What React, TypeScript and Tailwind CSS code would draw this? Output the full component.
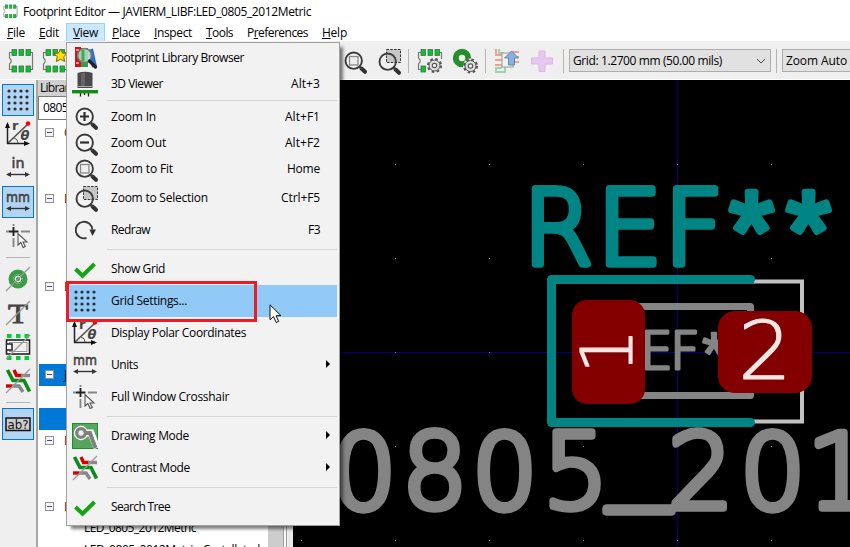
import { useLayoutEffect, useRef, useState } from "react";
import type { ReactNode } from "react";

/** Text whose letter spacing is computed so that it fills `w` pixels. */
function Fit({ w, children }: { w: number; children: ReactNode }) {
  const ref = useRef<HTMLSpanElement>(null);
  const [spacing, setSpacing] = useState(0);
  useLayoutEffect(() => {
    const el = ref.current;
    if (!el) return;
    const n = (el.textContent || "").length;
    setSpacing((w - el.getBoundingClientRect().width) / n);
  }, [w]);
  return (
    <span ref={ref} className="inline-block whitespace-pre" style={{ letterSpacing: spacing }}>
      {children}
    </span>
  );
}

const svgClass = "block h-[26px] w-[26px] shrink-0 overflow-visible";

function Magnifier({ kind }: { kind: "in" | "out" | "fit" | "sel" }) {
  const sel = kind === "sel";
  return (
    <svg viewBox="0 0 26 26" className={svgClass}>
      {sel && <rect x="11.500" y="1.500" width="14" height="13" fill="#c6c6c6" stroke="#333" strokeDasharray="2.500 1.300" />}
      <g transform={sel ? "translate(0 1)" : undefined}>
        <path d="M20.500 20.500l3.500 3.300" stroke="#303030" strokeWidth="4" strokeLinecap="round" />
        <path d="M18 18l3 3" stroke="#404040" strokeWidth="2" />
        <circle cx="12.700" cy="12.700" r="8.200" fill={sel ? "none" : "#f4f4f4"} stroke="#3a3a3a" strokeWidth="1.900" />
        {kind === "in" && <path d="M8 12.500h9M12.500 8v9" stroke="#303030" strokeWidth="2.200" />}
        {kind === "out" && <path d="M8 12.500h9" stroke="#303030" strokeWidth="2.200" />}
        {kind === "fit" && <rect x="8.500" y="8.500" width="8.500" height="8.500" fill="#eee" stroke="#888" strokeWidth="1.300" />}
      </g>
    </svg>
  );
}

function DotsIcon() {
  const p = [3, 9, 15, 21];
  return (
    <svg viewBox="0 0 26 26" className={svgClass}>
      {p.map((y) => p.map((x) => <circle key={`${x}-${y}`} cx={x + 1} cy={y + 1} r="1.600" fill="#2d3338" />))}
    </svg>
  );
}

function PolarIcon() {
  return (
    <svg viewBox="0 0 26 26" className={svgClass}>
      <path d="M2.500 22.500L23 3" stroke="#555" strokeWidth="1.700" />
      <path d="M2 22.500h21M2.500 23V3" stroke="#222" strokeWidth="1.500" fill="none" />
      <path d="M0 7L2.500 1L5 7zM19 20l6 2.500-6 2.500z" fill="#111" />
      <path d="M9 17q4 1 4 5" stroke="#555" fill="none" />
      <text x="7" y="9" fontSize="13" fontWeight="700" fill="#444" className="font-['DejaVu_Sans']">r</text>
      <text x="15.500" y="18.500" fontSize="13" fontWeight="700" fontStyle="italic" fill="#444" className="font-['DejaVu_Sans']">θ</text>
      <circle cx="23" cy="2.500" r="2.300" fill="#f00" />
    </svg>
  );
}

function UnitIcon({ unit }: { unit: string }) {
  return (
    <svg viewBox="0 0 26 26" className={svgClass}>
      <text x="13" y="12.500" textAnchor="middle" textLength={unit === "mm" ? 24 : 13} lengthAdjust="spacingAndGlyphs" fontSize="14" fill="#444" stroke="#444" strokeWidth=".6" className="font-['DejaVu_Sans']">{unit}</text>
      <path d="M3 19.500h20" stroke="#333" strokeWidth="1.400" />
      <path d="M6 17l-5 2.500 5 2.500zM20 17l5 2.500-5 2.500z" fill="#333" />
    </svg>
  );
}

function CrosshairIcon() {
  return (
    <svg viewBox="0 0 26 26" className={svgClass}>
      <path d="M1 8.500h2M16 8.500h9M8.500 1v2M8.500 15v9" stroke="#888" strokeWidth="1.900" />
      <path d="M3.500 8.500h10M8.500 4v9" stroke="#222" strokeWidth="1.900" />
      <path d="M13 10.500v11.500l2.800-2.500 2.300 5 2.200-1-2.300-4.500h4z" fill="#f5f5f5" stroke="#555" strokeWidth="1.100" />
    </svg>
  );
}

function RedrawIcon() {
  return (
    <svg viewBox="0 0 26 26" className={svgClass}>
      <path d="M14.500 21A8.300 8.300 0 1 1 20.300 12.500" fill="none" stroke="#3a3a3a" strokeWidth="1.900" />
      <path d="M17.500 12.500h6.500l-3.500 6.500z" fill="#2d2d2d" />
    </svg>
  );
}

function CheckIcon() {
  return (
    <svg viewBox="0 0 26 26" className={svgClass}>
      <path d="M3.500 13l7 6.800L22.500 8" fill="none" stroke="#14a314" strokeWidth="4" />
    </svg>
  );
}

function PadIcon() {
  return (
    <svg viewBox="0 0 26 26" className={svgClass}>
      <circle cx="13" cy="13" r="7" fill="#fff" stroke="#3c9d46" strokeWidth="5" />
      <circle cx="13" cy="13" r="4" fill="#eee" stroke="#2b8d35" strokeWidth="1" />
      <circle cx="13" cy="13" r="2" fill="#2b9339" />
      <path d="M1 25L25 1" stroke="#999" strokeWidth="1.300" />
    </svg>
  );
}

function TextIcon() {
  return (
    <svg viewBox="0 0 26 26" className={svgClass}>
      <text x="13" y="23" textAnchor="middle" fontSize="28" textLength="20" lengthAdjust="spacingAndGlyphs" fill="#444" stroke="#444" strokeWidth=".8" className="font-['Liberation_Serif']">T</text>
      <path d="M1 25L25 1" stroke="#999" strokeWidth="1.300" />
    </svg>
  );
}

function OutlineIcon() {
  return (
    <svg viewBox="0 0 26 26" className={svgClass}>
      <path d="M2 2h4.500M11 2h4.500M19.500 2H24M2 24h4.500M11 24h4.500M19.500 24H24" stroke="#0c3" strokeWidth="4" />
      <rect x="1.500" y="6" width="23" height="14" fill="#fff" stroke="#222" strokeWidth="1.600" />
      <rect x="4.500" y="8.500" width="17.500" height="9" fill="#eee" stroke="#999" />
      <path d="M2 10h5v6H2" fill="#fff" stroke="#222" strokeWidth="1.500" />
      <path d="M1 25L25 1" stroke="#999" strokeWidth="1.300" />
    </svg>
  );
}

function ContrastIcon() {
  return (
    <svg viewBox="0 0 26 26" className={svgClass}>
      <path d="M9 2l2.500 5.500H17" fill="none" stroke="#d80000" strokeWidth="3.400" />
      <path d="M16 7.500h9" stroke="#888" strokeWidth="3.400" />
      <path d="M1 18h6" stroke="#d80000" strokeWidth="3.400" />
      <path d="M7 18h7l4 6" fill="none" stroke="#888" strokeWidth="3.400" />
      <path d="M2.500 2l5.500 10.500h11l5.500 11" fill="none" stroke="#0c8c1c" strokeWidth="3.600" />
      <path d="M1 25L25 1" stroke="#999" strokeWidth="1.300" />
    </svg>
  );
}

function TreeIcon() {
  return (
    <svg viewBox="0 0 26 26" className={svgClass}>
      <rect x="1" y="7" width="24" height="12.500" fill="#ccc" stroke="#111" strokeWidth="1.500" />
      <text x="13" y="17.500" textAnchor="middle" fontSize="12.500" textLength="21" lengthAdjust="spacingAndGlyphs" fill="#111" className="font-['DejaVu_Sans']">ab?</text>
    </svg>
  );
}

function BooksIcon() {
  return (
    <svg viewBox="0 0 26 26" className={svgClass}>
      <path d="M3 2h6v20H3z" fill="#c8161d" />
      <path d="M9 3h7v19H9z" fill="#2ba24a" />
      <path d="M16 5l5-1.500 4 18-5 1z" fill="#2c6fd1" />
      <path d="M4 5h3M4 18h3" stroke="#fff" />
      <circle cx="12.500" cy="10.500" r="7" fill="#b8dccb" fillOpacity=".85" stroke="#777" strokeWidth="1.500" />
      <path d="M11 5v11" stroke="#3cae50" strokeWidth="3" />
      <path d="M17.500 16l6 6" stroke="#222" strokeWidth="3.300" strokeLinecap="round" />
    </svg>
  );
}

function Viewer3DIcon() {
  return (
    <svg viewBox="0 0 26 26" className={svgClass}>
      <path d="M5.500 2q7.500-2.500 15 0v15h-15z" fill="#4a4a4a" />
      <path d="M9 2h4v13H9z" fill="#666" />
      <path d="M5.500 15.500h15" stroke="#aaa" />
      <path d="M8.500 19v6.500M12.500 19v5M16.500 19v6.500" stroke="#222" strokeWidth="1.300" />
      <rect x="0" y="19" width="26" height="3.400" fill="#168c16" />
    </svg>
  );
}

function DrawingIcon() {
  return (
    <svg viewBox="0 0 26 26" className={svgClass}>
      <rect x=".5" y=".5" width="25" height="25" fill="#58a65e" stroke="#268a2e" />
      <path d="M9 10h10l6 15" fill="none" stroke="#fff" strokeWidth="7" />
      <circle cx="9" cy="10" r="7.200" fill="#fff" />
      <path d="M9 10h9l5.500 15" fill="none" stroke="#808080" strokeWidth="4" />
      <circle cx="9" cy="10" r="4.300" fill="#eee" stroke="#808080" strokeWidth="3.300" />
    </svg>
  );
}

function Gear({ x, y }: { x: number; y: number }) {
  return (
    <g transform={`translate(${x} ${y})`}>
      <circle r="6" fill="none" stroke="#555" strokeWidth="3" strokeDasharray="2.400 2.312" />
      <circle r="5.500" fill="#ddd" stroke="#555" strokeWidth="1" />
      <circle r="2.200" fill="#f5f5f5" stroke="#555" strokeWidth="1.200" />
    </g>
  );
}

function ChipIcon({ mark, className = svgClass }: { mark?: "star" | "gear"; className?: string }) {
  return (
    <svg viewBox="0 0 26 26" className={className}>
      <path d="M5 4.500H1.500V10q3.500 3 0 6v5.500H5M21 4.500h3.500v17H21" fill="none" stroke="#777" strokeWidth="1.200" />
      {[4, 11, 18].map((x) => (
        <g key={x} fill="#00c92c" stroke="#4c6b4f" strokeWidth=".8">
          <rect x={x} y="1.500" width="4.500" height="6" />
          <rect x={x} y="18" width="4.500" height="6" />
        </g>
      ))}
      {mark === "star" && <path d="M18.500 1l2 4 4.500.5-3.300 3.300 1 4.700-4.200-2.300-4.200 2.300 1-4.700L12 5.500l4.500-.5z" fill="#ffe000" stroke="#806600" />}
      {mark === "gear" && (
        <>
          <rect x="10" y="11" width="16" height="15" fill="#efefef" />
          <Gear x={17.5} y={17.5} />
        </>
      )}
    </svg>
  );
}

function PadGearIcon() {
  return (
    <svg viewBox="0 0 26 26" className={svgClass}>
      <circle cx="10" cy="10" r="6.200" fill="none" stroke="#258f2c" strokeWidth="6" />
      <circle cx="18.500" cy="18" r="7.500" fill="#efefef" />
      <Gear x={18.5} y={18} />
    </svg>
  );
}

function InsertIcon() {
  return (
    <svg viewBox="0 0 26 26" className={svgClass}>
      <path d="M2 1v6h7M1 12h7M1 17h7M18 4h7M19 9h6M19 14h6" fill="none" stroke="#eea08c" strokeWidth="1.900" />
      <path d="M5 1v4h5M11 19v5H2v-4h6" fill="none" stroke="#9cd2ae" strokeWidth="1.900" />
      <rect x="8" y="5" width="11" height="14" fill="#f4f1ee" stroke="#999" />
      <path d="M17.500 3l7 7h-4v7h-6v-7h-4z" fill="#88b0df" stroke="#6287b4" />
    </svg>
  );
}

function PlusIcon() {
  return (
    <svg viewBox="0 0 26 26" className={svgClass}>
      <path d="M10 3h6v7h7.500v6H16v7.500h-6V16H2.500v-6H10z" fill="#e8c8f1" stroke="#dcb4e8" />
    </svg>
  );
}

type Item = { label: string; w: number; icon: ReactNode; key?: string; kw?: number; sub?: boolean; tall?: boolean; hot?: boolean };

const groups: Item[][] = [
  [
    { label: "Footprint Library Browser", w: 133, icon: <BooksIcon /> },
    { label: "3D Viewer", w: 52, icon: <Viewer3DIcon />, key: "Alt+3", kw: 29 },
  ],
  [
    { label: "Zoom In", w: 45, icon: <Magnifier kind="in" />, key: "Alt+F1", kw: 35 },
    { label: "Zoom Out", w: 55, icon: <Magnifier kind="out" />, key: "Alt+F2", kw: 35 },
    { label: "Zoom to Fit", w: 62, icon: <Magnifier kind="fit" />, key: "Home", kw: 33 },
    { label: "Zoom to Selection", w: 97, icon: <Magnifier kind="sel" />, key: "Ctrl+F5", kw: 39, tall: true },
    { label: "Redraw", w: 39, icon: <RedrawIcon />, key: "F3", kw: 12, tall: true },
  ],
  [
    { label: "Show Grid", w: 54, icon: <CheckIcon />, tall: true },
    { label: "Grid Settings...", w: 76, icon: <DotsIcon />, tall: true, hot: true },
    { label: "Display Polar Coordinates", w: 135, icon: <PolarIcon />, tall: true },
    { label: "Units", w: 27, icon: <UnitIcon unit="mm" />, tall: true, sub: true },
    { label: "Full Window Crosshair", w: 118, icon: <CrosshairIcon />, tall: true },
  ],
  [
    { label: "Drawing Mode", w: 78, icon: <DrawingIcon />, tall: true, sub: true },
    { label: "Contrast Mode", w: 79, icon: <ContrastIcon />, tall: true, sub: true },
  ],
  [{ label: "Search Tree", w: 59, icon: <CheckIcon />, tall: true }],
];

function ViewMenu() {
  return (
    <div className="absolute left-[66px] top-[42px] flex w-[274px] flex-col border border-[#a0a0a0] bg-[#f2f2f2] p-[2px] shadow-[4px_4px_3px_-1px_rgba(0,0,0,0.5)]">
      {groups.map((items, g) => (
        <div key={g} className="flex flex-col">
          {g > 0 && <div className="ml-[38px] flex h-[7px] items-center"><div className="h-px w-full bg-[#d5d5d5]" /></div>}
          {items.map((it) => (
            <div key={it.label} className={`flex items-center pl-[3px] ${it.tall ? "h-8" : "h-[26px]"} ${it.hot ? "bg-[#91c9f7]" : ""}`}>
              {it.icon}
              <span className="ml-[13px] flex-1"><Fit w={it.w}>{it.label}</Fit></span>
              {it.key && <span className="mr-[17px]"><Fit w={it.kw || 0}>{it.key}</Fit></span>}
              {it.sub && <span className="mb-[3px] mr-[7px] h-0 w-0 border-y-4 border-l-4 border-y-transparent border-l-black" />}
            </div>
          ))}
        </div>
      ))}
      <div className="absolute -left-px top-[238px] h-[41px] w-[191px] border-[3px] border-[#ed1c24]" />
      <svg viewBox="0 0 14 20" className="absolute left-[202px] top-[261px] h-[20px] w-[14px]">
        <path d="M1 .8v15l3.500-3.300 2.700 6 2.500-1.100-2.600-5.700H12z" fill="#fff" stroke="#111" />
      </svg>
    </div>
  );
}

const menus: { label: string; w: number; box: string; active?: boolean }[] = [
  { label: "File", w: 18, box: "pl-[7px] w-[32px]" },
  { label: "Edit", w: 20, box: "pl-[7px] w-[34px]" },
  { label: "View", w: 25, box: "pl-[6px] w-[39px]", active: true },
  { label: "Place", w: 28, box: "pl-[7px] w-[42px]" },
  { label: "Inspect", w: 38, box: "pl-[7px] w-[52px]" },
  { label: "Tools", w: 27, box: "pl-[7px] w-[41px]" },
  { label: "Preferences", w: 61, box: "pl-[7px] w-[75px]" },
  { label: "Help", w: 25, box: "pl-[7px] w-[40px]" },
];

function ToolbarLine() {
  return <div className="h-6 w-px shrink-0 bg-[#b4b4b4]" />;
}

function Toolbar() {
  return (
    <div className="flex h-[39px] items-center border-b border-white bg-[#efefef] pt-px">
      <div className="ml-2 flex gap-2"><ChipIcon /><ChipIcon mark="star" /></div>
      <div className="ml-[273px] flex gap-2"><Magnifier kind="fit" /><Magnifier kind="sel" /></div>
      <div className="ml-[7px] mr-[8px]"><ToolbarLine /></div>
      <div className="flex gap-[9px]"><ChipIcon mark="gear" /><PadGearIcon /></div>
      <div className="ml-[7px] mr-[8px]"><ToolbarLine /></div>
      <div className="flex gap-[9px]"><InsertIcon /><PlusIcon /></div>
      <div className="ml-[8px] mr-[5px]"><ToolbarLine /></div>
      <div className="flex h-[23px] w-[202px] shrink-0 items-center border border-[#adadad] bg-[#e1e1e1] pl-[3px]">
        <Fit w={149}>Grid: 1.2700 mm (50.00 mils)</Fit>
        <svg viewBox="0 0 10 6" className="ml-auto mr-[4px] h-[6px] w-[10px]"><path d="M1 1l4 4 4-4" fill="none" stroke="#444" /></svg>
      </div>
      <div className="ml-[5px] mr-[5px]"><ToolbarLine /></div>
      <div className="flex h-[23px] w-[110px] shrink-0 items-center border border-[#adadad] bg-[#e1e1e1] pl-[3px]">
        <Fit w={61}>Zoom Auto</Fit>
      </div>
    </div>
  );
}

function SideButton({ on, children }: { on?: boolean; children: ReactNode }) {
  return (
    <div className={`flex h-8 w-8 shrink-0 items-center justify-center ${on ? "border border-[#0078d7] bg-[#b3d5f3]" : ""}`}>{children}</div>
  );
}

function SideLine() {
  return <div className="flex h-[7px] w-6 items-center"><div className="h-px w-full bg-[#b4b4b4]" /></div>;
}

function SideBar() {
  return (
    <div className="flex w-[36px] shrink-0 flex-col items-center gap-[2px] bg-[#efefef] pt-[4px]">
      <SideButton on><DotsIcon /></SideButton>
      <SideButton><PolarIcon /></SideButton>
      <SideButton><UnitIcon unit="in" /></SideButton>
      <SideButton on><UnitIcon unit="mm" /></SideButton>
      <SideButton><CrosshairIcon /></SideButton>
      <SideLine />
      <SideButton><PadIcon /></SideButton>
      <SideButton><TextIcon /></SideButton>
      <SideButton><OutlineIcon /></SideButton>
      <SideButton><ContrastIcon /></SideButton>
      <SideLine />
      <SideButton on><TreeIcon /></SideButton>
    </div>
  );
}

const tree: { head?: string; leaf?: string; w?: number; sel?: boolean }[] = [
  { head: "C" }, {}, {},
  { head: "D" }, {}, {}, {},
  { head: "F" }, {}, {}, {},
  { head: "J", sel: true }, {},
  { sel: true },
  { head: "I" }, {}, {},
  { head: "L" },
  { leaf: "LED_0805_2012Metric", w: 112 },
  { leaf: "LED_0805_2012Metric_Castellated", w: 176 },
];

function TreePanel() {
  return (
    <div className="flex w-[257px] shrink-0 flex-col border-l-2 border-[#a6a6a6] bg-[#efefef]">
      <div className="flex h-[16px] shrink-0 items-center bg-[#d0d0d0] pl-[2px]"><Fit w={42}>Libraries</Fit></div>
      <div className="flex h-[24px] shrink-0 items-center border border-[#7a7a7a] bg-white pl-[4px]"><Fit w={25}>0805</Fit></div>
      <div className="flex min-h-0 flex-1">
        <div className="flex w-[230px] flex-col overflow-hidden bg-white pl-px pt-[2px]">
          {tree.map((r, i) => (
            <div key={i} className={`flex h-[22px] shrink-0 items-center ${r.sel ? "bg-[#0078d7]" : ""}`}>
              {r.head && (
                <>
                  <span className="mb-px ml-[6px] flex h-[9px] w-[9px] items-center border border-[#919191] bg-[#f6f6f6] px-px"><span className="h-px w-full bg-[#3a50a0]" /></span>
                  <span className="ml-[10px] text-[#3a1414]">{r.head}</span>
                </>
              )}
              {r.leaf && <span className="mb-[2px] ml-[45px]"><Fit w={r.w || 0}>{r.leaf}</Fit></span>}
            </div>
          ))}
        </div>
        <div className="w-[15px] bg-[#cdcdcd]" />
        <div className="flex flex-1 justify-between border-l border-[#a0a0a0] bg-[#f0f0f0]"><div className="w-px bg-white" /><div className="w-px bg-[#a0a0a0]" /><div className="w-[5px] bg-[#e8e8e8]" /></div>
      </div>
    </div>
  );
}

function Canvas() {
  const gx = [301, 395, 489, 583, 677, 771];
  const gy = [164, 258, 352, 446, 540];
  return (
    <svg viewBox="293 80 557 467" className="block h-[467px] w-[557px] shrink-0 bg-black font-['DejaVu_Sans',sans-serif] font-extralight">
      <path d="M293 352.500H850M677.500 80V547" stroke="#000084" />
      {gy.map((y) => gx.map((x) => <rect key={`${x}-${y}`} x={x} y={y} width="1" height="1" fill="#848484" />))}
      <g strokeLinejoin="round" strokeLinecap="round">
        <g fill="#848484" stroke="#848484" strokeWidth="7.500">
          <text y="508" x="331 402 472 543" fontSize="103">0805</text>
          <text y="488" x="608" fontSize="103" textLength="62" lengthAdjust="spacingAndGlyphs">_</text>
          <text y="508" x="668 740 807" fontSize="103">201</text>
        </g>
        <path d="M640 306.500H750.500V395.500H640" fill="none" stroke="#848484" strokeWidth="7" />
        <g fill="#848484" stroke="#848484" strokeWidth="3.200">
          <text y="369" x="640 670" fontSize="52">EF</text>
          <text x="714" y="374" textAnchor="middle" fontSize="60" strokeWidth="2.500" className="font-['Liberation_Sans']">*</text>
        </g>
        <path d="M750 281.500H802V421.500H750" fill="none" stroke="#c2c2c2" strokeWidth="4" strokeLinejoin="miter" />
        <path d="M750.500 279.500H551.500V422.500H750.500" fill="none" stroke="#008484" strokeWidth="9" />
        <g fill="#008484" stroke="#008484" strokeWidth="7.500">
          <text y="263.500" x="523" fontSize="103" textLength="70" lengthAdjust="spacingAndGlyphs">R</text>
          <text y="263.500" x="597 664" fontSize="103">EF</text>
          <text y="270" x="751.500" textAnchor="middle" fontSize="113" strokeWidth="6.500" className="font-['Liberation_Sans']">*</text>
          <text y="270" x="808.500" textAnchor="middle" fontSize="113" strokeWidth="6.500" className="font-['Liberation_Sans']">*</text>
        </g>
      </g>
      <rect x="572" y="300" width="73" height="104" rx="15" fill="#840000" />
      <rect x="718" y="311" width="94" height="82" rx="17" fill="#840000" />
      <g fill="#f3e6e6" stroke="#f3e6e6" strokeWidth="1.200" strokeLinejoin="round">
        <text transform="translate(632 374) rotate(-90)" fontSize="72">1</text>
        <text x="738" y="379" fontSize="81" textLength="54" lengthAdjust="spacingAndGlyphs">2</text>
      </g>
    </svg>
  );
}

export default function App() {
  return (
    <div className="relative flex h-[547px] w-[850px] flex-col overflow-hidden bg-white font-['Open_Sans','Noto_Sans',sans-serif] text-[12px] leading-4 text-black">
      <div className="flex h-[23px] items-center pl-[3px]">
        <ChipIcon className="block h-[15px] w-[15px]" />
        <span className="ml-[5px]"><Fit w={288}>Footprint Editor — JAVIERM_LIBF:LED_0805_2012Metric</Fit></span>
      </div>
      <div className="flex h-[18px]">
        {menus.map((m) => (
          <div key={m.label} className={`flex h-[19px] items-center ${m.box} ${m.active ? "border border-[#99d1ff] bg-[#cce8ff]" : ""}`}>
            <Fit w={m.w}>
              {m.label === "Preferences" ? <>P<u>r</u>eferences</> : <><u>{m.label[0]}</u>{m.label.slice(1)}</>}
            </Fit>
          </div>
        ))}
      </div>
      <Toolbar />
      <div className="flex min-h-0 flex-1">
        <SideBar />
        <TreePanel />
        <Canvas />
      </div>
      <ViewMenu />
    </div>
  );
}
